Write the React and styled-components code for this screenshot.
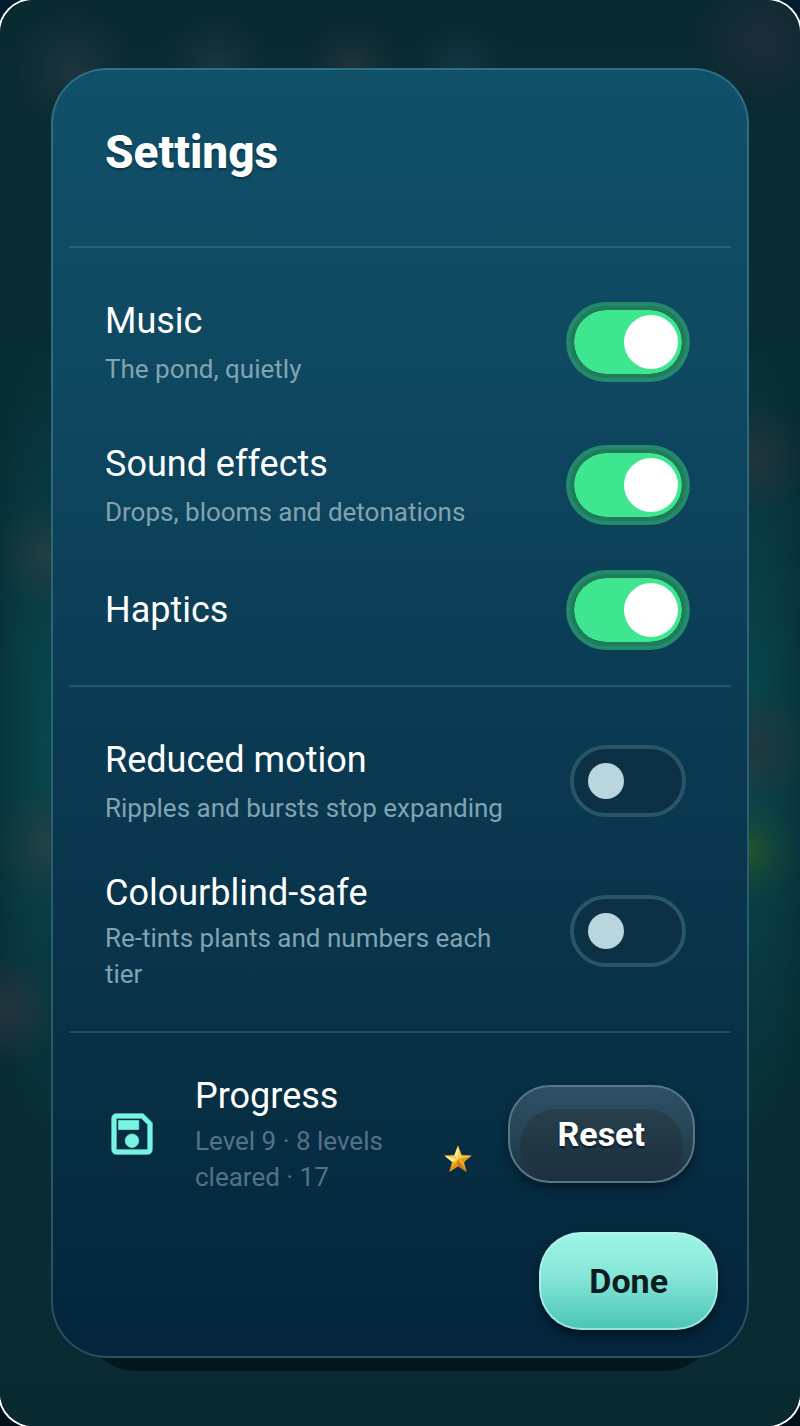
import { useId, useState } from 'react';
import styled, { createGlobalStyle, css } from 'styled-components';

const GlobalStyle = createGlobalStyle`
    *, *::before, *::after {
        box-sizing: border-box;
    }

    body {
        margin: 0;
        background: linear-gradient(#021c30, #020f1a);
        color: #fff;
        font-family: Roboto, "Liberation Sans", sans-serif;
    }

    h1, h2, p {
        margin: 0;
    }
`;

const Pond = styled.main`
    min-height: 100vh;
    padding: 68px 51px;
    border-radius: 33px;
    box-shadow: 0 0 0 2px #fff;
    isolation: isolate;
    background:
        radial-gradient(circle at 72px 72px, rgba(50, 62, 74, 0.5), rgba(44, 60, 70, 0.25) 30px, transparent 62px),
        radial-gradient(circle at 216px 72px, rgba(40, 68, 82, 0.5), rgba(40, 68, 82, 0.2) 28px, transparent 56px),
        radial-gradient(circle at 352px 68px, rgba(64, 62, 72, 0.5), rgba(50, 60, 70, 0.25) 20px, transparent 46px),
        radial-gradient(circle at 460px 72px, rgba(32, 64, 84, 0.5), rgba(32, 64, 84, 0.25) 22px, transparent 48px),
        radial-gradient(circle at 762px 42px, rgba(48, 44, 62, 0.5), rgba(42, 44, 60, 0.3) 34px, transparent 66px),
        radial-gradient(circle at 50px 556px, rgba(50, 62, 70, 0.65), rgba(50, 58, 64, 0.35) 26px, transparent 56px),
        radial-gradient(circle at 54px 845px, rgba(54, 66, 72, 0.65), rgba(50, 58, 64, 0.35) 30px, transparent 62px),
        radial-gradient(circle at 4px 1010px, rgba(52, 54, 68, 0.65), rgba(48, 54, 66, 0.35) 28px, transparent 54px),
        radial-gradient(circle at 752px 458px, rgba(50, 50, 58, 0.65), rgba(46, 50, 58, 0.35) 28px, transparent 56px),
        radial-gradient(circle at 752px 750px, rgba(48, 48, 56, 0.65), rgba(44, 50, 58, 0.35) 34px, transparent 64px),
        radial-gradient(circle at 748px 851px, rgba(40, 92, 36, 0.75), rgba(34, 80, 40, 0.35) 26px, transparent 54px),
        radial-gradient(ellipse 62px 400px at 46px 740px, #08474d, rgba(8, 68, 74, 0.6) 50%, transparent),
        radial-gradient(ellipse 62px 400px at calc(100% - 46px) 740px, #08474d, rgba(8, 68, 74, 0.6) 50%, transparent),
        linear-gradient(#0a2a32, #072f38 50%, #0a2a32);
`;

const Card = styled.section`
    position: relative;
    border: 2px solid rgba(116, 190, 196, 0.3);
    border-radius: 56px;
    background: linear-gradient(#115069, #0e465f 28%, #0a3a52 52%, #072e43 82%, #04253c) border-box;

    /* flat lip under the sheet */
    &::after {
        content: '';
        position: absolute;
        z-index: -1;
        right: 28px;
        bottom: -15px;
        left: 28px;
        height: 112px;
        border-radius: 56px;
        background: #04171c;
    }
`;

const Header = styled.header`
    padding: 52px 52px 64px;
`;

const Title = styled.h1`
    font-size: 46px;
    font-weight: 800;
    line-height: 60px;
    text-shadow: 0 2px 2px rgba(0, 20, 30, 0.4);
`;

const Group = styled.div`
    margin: 0 16px;
    padding: 22px 36px;
    border-top: 2px solid rgba(116, 190, 196, 0.22);

    &:last-of-type {
        padding-bottom: 0;
    }
`;

const heights = {
    short: 107,
    medium: 143,
    tall: 157,
};

const Row = styled.div`
    display: flex;
    align-items: center;
    gap: 36px;
    min-height: ${({ $size }) => heights[$size]}px;
`;

const RowText = styled.div`
    flex: 1;
    min-width: 0;
    display: flex;
    flex-direction: column;
    gap: ${({ $size }) => ($size === 'tall' ? 3 : 6)}px;
`;

const labelStyle = css`
    font-size: 36px;
    font-weight: 400;
    line-height: 48px;
`;

const Label = styled.label`
    ${labelStyle}
`;

const Heading = styled.h2`
    ${labelStyle}
`;

const Hint = styled.p`
    color: ${({ $dim }) => ($dim ? '#547286' : '#82a3b2')};
    font-size: 26px;
    line-height: 36px;
`;

const Switch = styled.input`
    appearance: none;
    flex: none;
    display: flex;
    align-items: center;
    width: 116px;
    height: 72px;
    margin: 0 9px 0 8px;
    padding: 0 14px;
    border: 4px solid #285668;
    border-radius: 36px;
    background: #0d3144;
    cursor: pointer;

    &::before {
        content: '';
        width: 36px;
        height: 36px;
        border-radius: 50%;
        background: #b9d5de;
    }

    &:checked {
        justify-content: flex-end;
        padding: 0 4px;
        border-color: #1f7d59;
        background: #3ee68f padding-box;
        box-shadow: 0 0 0 4px #248a6d;
    }

    &:checked::before {
        width: 54px;
        height: 54px;
        background: #fff;
    }
`;

const SaveIcon = styled.svg`
    flex: none;
    width: 54px;
    height: 54px;
    fill: #77f3e1;
    stroke: #77f3e1;
    stroke-width: 0.3;
`;

const Summary = styled.div`
    flex: 1;
    display: flex;
    align-items: center;
    gap: 16px;
`;

const StarIcon = styled.svg`
    flex: none;
    align-self: flex-end;
    width: 28px;
    height: 28px;
    margin-bottom: 22px;
`;

const Button = styled.button`
    position: relative;
    isolation: isolate;
    height: 98px;
    padding: 0 48px;
    border: 2px solid;
    border-radius: 42px;
    font: 700 34px/48px Roboto, "Liberation Sans", sans-serif;
    cursor: pointer;
`;

const GlassButton = styled(Button)`
    border-color: #587686;
    background: linear-gradient(#2e5165, #264557 50%, #1c2f3e) border-box;
    box-shadow: 0 6px 8px rgba(0, 12, 22, 0.45);
    color: #fff;
    text-shadow: 0 2px 2px rgba(0, 10, 18, 0.7);

    &::before {
        content: '';
        position: absolute;
        z-index: -1;
        inset: 22px 10px 0;
        border-radius: 36px;
        background: linear-gradient(#273f4c, #1c2f3e);
    }
`;

const MintButton = styled(Button)`
    border-color: rgba(190, 240, 236, 0.7);
    background: linear-gradient(#9ff6e7, #86e6d8 45%, #49c4b5) border-box;
    box-shadow: 0 6px 8px rgba(0, 12, 22, 0.6);
    color: #0c1c20;
`;

const Footer = styled.footer`
    display: flex;
    justify-content: flex-end;
    padding: 20px 29px 26px;
`;

const sound = [
    { label: 'Music', hint: 'The pond, quietly', size: 'medium', on: true },
    { label: 'Sound effects', hint: 'Drops, blooms and detonations', size: 'medium', on: true },
    { label: 'Haptics', size: 'short', on: true },
];

const display = [
    { label: 'Reduced motion', hint: 'Ripples and bursts stop expanding', size: 'medium', on: false },
    { label: 'Colourblind-safe', hint: 'Re-tints plants and numbers each tier', size: 'tall', on: false },
];

const Setting = ({ label, hint, size, on }) => {
    const id = useId();
    const [checked, setChecked] = useState(on);

    return (
        <Row $size={size}>
            <RowText $size={size}>
                <Label htmlFor={id}>{label}</Label>
                {hint && <Hint id={`${id}-hint`}>{hint}</Hint>}
            </RowText>
            <Switch
                id={id}
                type="checkbox"
                role="switch"
                aria-describedby={hint ? `${id}-hint` : undefined}
                checked={checked}
                onChange={(e) => setChecked(e.target.checked)}
            />
        </Row>
    );
};

const Save = () => (
    <SaveIcon viewBox="0 0 24 24" aria-hidden="true">
        <path d="M17 3H5c-1.110 0-2 .9-2 2v14c0 1.100.89 2 2 2h14c1.100 0 2-.9 2-2V7l-4-4zm2 16H5V5h11.170L19 7.830V19zm-7-7c-1.660 0-3 1.340-3 3s1.340 3 3 3 3-1.340 3-3-1.340-3-3-3zM6 6h9v4H6z" />
    </SaveIcon>
);

const Star = () => (
    <StarIcon viewBox="0 0 28 28" role="img" aria-label="stars">
        <defs>
            <linearGradient id="star-gold" x1="0" y1="0" x2="0" y2="1">
                <stop offset="0" stopColor="#ffe98a" />
                <stop offset="0.5" stopColor="#fbc63a" />
                <stop offset="1" stopColor="#d98412" />
            </linearGradient>
        </defs>
        <path
            d="M14 1l3.5 9.2 9.8.5-7.6 6.200 2.600 9.500L14 21l-8.300 5.400 2.600-9.500L.7 10.700l9.800-.5z"
            fill="url(#star-gold)"
            stroke="#e2a52c"
            strokeWidth="0.5"
            strokeLinejoin="round"
        />
        <path d="M14 1v13.500l-3.500-4.300zM.7 10.700L14 14.500l-5.700 2.400z" fill="#ffeb94" />
        <path d="M27.300 10.700L14 14.500l5.700 2.400z" fill="#e39a1c" />
        <path d="M14 14.500V21l8.300 5.400z" fill="#c97a12" />
        <path d="M14 14.500V21l-8.300 5.400z" fill="#e2921a" />
    </StarIcon>
);

export default function App() {
    return (
        <>
            <GlobalStyle />
            <Pond>
                <Card>
                    <Header>
                        <Title>Settings</Title>
                    </Header>
                    <Group>
                        {sound.map((item) => (
                            <Setting key={item.label} {...item} />
                        ))}
                    </Group>
                    <Group>
                        {display.map((item) => (
                            <Setting key={item.label} {...item} />
                        ))}
                    </Group>
                    <Group>
                        <Row $size="tall">
                            <Save />
                            <Summary>
                                <RowText $size="tall">
                                    <Heading>Progress</Heading>
                                    <Hint $dim>Level 9 · 8 levels cleared · 17</Hint>
                                </RowText>
                                <Star />
                            </Summary>
                            <GlassButton type="button">Reset</GlassButton>
                        </Row>
                    </Group>
                    <Footer>
                        <MintButton type="button">Done</MintButton>
                    </Footer>
                </Card>
            </Pond>
        </>
    );
}
